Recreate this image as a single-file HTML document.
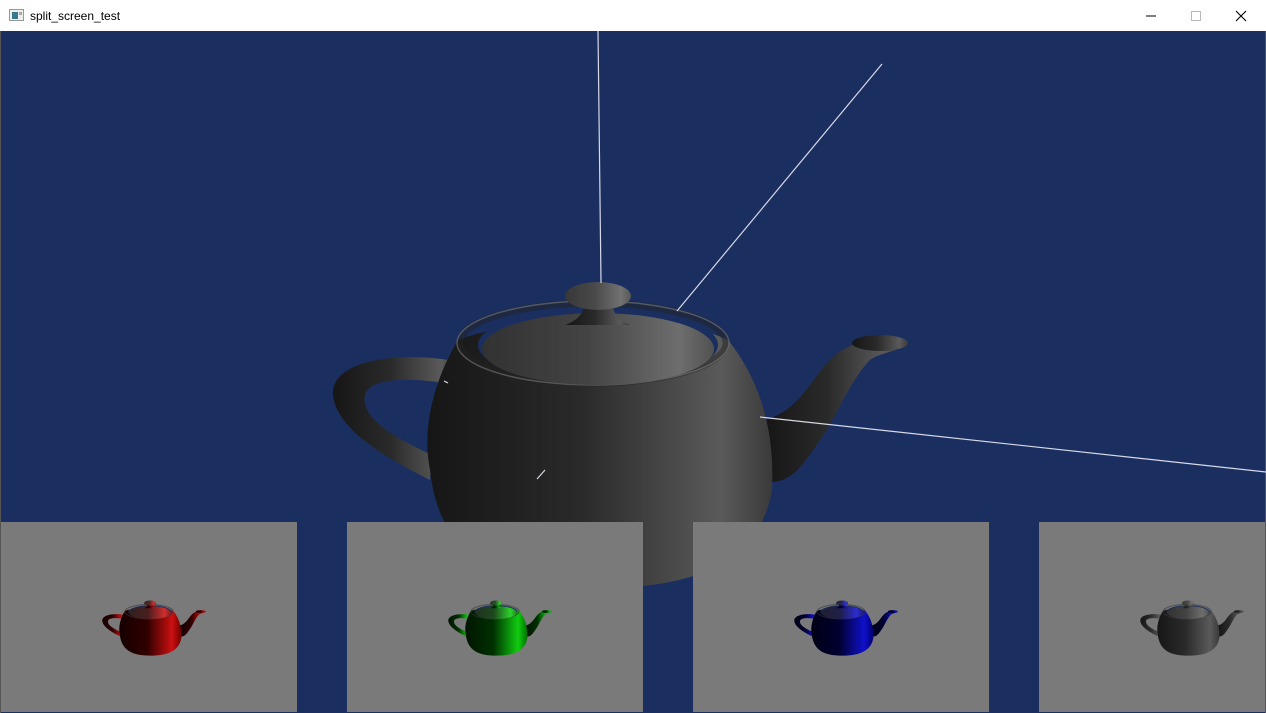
<!DOCTYPE html>
<html><head><meta charset="utf-8"><style>
html,body{margin:0;padding:0;width:1266px;height:713px;overflow:hidden;background:#fff}
.tb{position:absolute;left:0;top:0;width:1266px;height:31px;background:#fff;font:12px "Liberation Sans",sans-serif}
.tb .t{position:absolute;left:30px;top:9px;color:#000}
.win{position:absolute;left:0;top:31px;width:1266px;height:682px;background:#1a2f5f;border-left:1px solid #555;border-right:1px solid #555;box-sizing:border-box}
</style></head><body>
<div class="tb">
<svg style="position:absolute;left:9px;top:9px" width="15" height="13"><rect x="0.5" y="0.5" width="14" height="11" fill="#eee" stroke="#999"/><rect x="3" y="3" width="6" height="7" fill="#3a7a8a"/><rect x="10" y="3" width="3" height="3" fill="#aaa"/></svg>
<span class="t">split_screen_test</span>
<svg style="position:absolute;left:1140px;top:8px" width="115" height="16"><line x1="6" y1="8" x2="16" y2="8" stroke="#000"/><rect x="51.5" y="3.5" width="9" height="9" fill="none" stroke="#bbb"/><path d="M96 3 L106 13 M106 3 L96 13" stroke="#000" stroke-width="1.1"/></svg>
</div>
<div class="win"></div>
<svg style="position:absolute;left:0;top:0" width="1266" height="713">
<defs>
<linearGradient id="g0" x1="0" x2="1"><stop offset="0" stop-color="#161616"/><stop offset="0.45" stop-color="#2a2a2a"/><stop offset="0.85" stop-color="#5a5a5a"/><stop offset="1" stop-color="#3a3a3a"/></linearGradient>
<linearGradient id="gR" x1="0" x2="1"><stop offset="0" stop-color="#150000"/><stop offset="0.45" stop-color="#300000"/><stop offset="0.85" stop-color="#cc1010"/><stop offset="1" stop-color="#700000"/></linearGradient>
<linearGradient id="gG" x1="0" x2="1"><stop offset="0" stop-color="#001500"/><stop offset="0.45" stop-color="#003000"/><stop offset="0.85" stop-color="#10cc10"/><stop offset="1" stop-color="#007000"/></linearGradient>
<linearGradient id="gB" x1="0" x2="1"><stop offset="0" stop-color="#000015"/><stop offset="0.45" stop-color="#000030"/><stop offset="0.85" stop-color="#1010cc"/><stop offset="1" stop-color="#000070"/></linearGradient>
<g id="tp">
<path d="M460,362 C400,350 330,360 333,395 C336,430 390,460 430,480 L432,455 C400,440 360,420 365,395 C370,375 420,378 455,385 Z"/>
<path d="M765,420 C800,410 810,380 830,360 C845,345 860,338 905,342 C908,350 880,352 870,360 C850,380 835,420 820,440 C800,470 790,482 770,482 Z"/>
<ellipse cx="880" cy="343" rx="28" ry="8"/>
<path d="M430,470 C420,420 440,370 458,340 C520,315 680,315 728,340 C760,380 775,430 772,490 C760,560 700,588 600,588 C500,588 440,560 430,470 Z"/>
<ellipse cx="593" cy="343" rx="133" ry="40" fill="none" stroke="#222" stroke-opacity="0.5" stroke-width="7"/>
<ellipse cx="593" cy="343" rx="136" ry="42" fill="none" stroke="#888" stroke-opacity="0.5" stroke-width="1.5"/>
<ellipse cx="598" cy="345" rx="120" ry="37" fill="#1a2f5f"/>
<ellipse cx="598" cy="349" rx="116" ry="36"/>
<ellipse cx="598" cy="349" rx="116" ry="36" fill="#fff" fill-opacity="0.12"/>
<path d="M585,300 L612,300 C612,315 620,320 630,325 L566,325 C576,320 585,315 585,300 Z"/>
<ellipse cx="598" cy="296" rx="33" ry="14"/>
<ellipse cx="598" cy="296" rx="33" ry="14" fill="#fff" fill-opacity="0.15"/>
</g>
</defs>
<use href="#tp" fill="url(#g0)"/>
<g stroke="#d8d8e8" stroke-width="1.2">
<line x1="598" y1="31" x2="601" y2="283"/>
<line x1="882" y1="64" x2="677" y2="311"/>
<line x1="760" y1="417" x2="1266" y2="472"/>
<line x1="537" y1="479" x2="545" y2="470"/>
<line x1="444" y1="381" x2="448" y2="383"/>
</g>
<g fill="#7a7a7a">
<rect x="1" y="522" width="296" height="190"/>
<rect x="347" y="522" width="296" height="190"/>
<rect x="693" y="522" width="296" height="190"/>
<rect x="1039" y="522" width="226" height="190"/>
</g>
<use href="#tp" fill="url(#gR)" transform="translate(150,629) scale(0.18) translate(-598,-440)"/>
<use href="#tp" fill="url(#gG)" transform="translate(496,629) scale(0.18) translate(-598,-440)"/>
<use href="#tp" fill="url(#gB)" transform="translate(842,629) scale(0.18) translate(-598,-440)"/>
<use href="#tp" fill="url(#g0)" transform="translate(1188,629) scale(0.18) translate(-598,-440)"/>
</svg>
</body></html>
